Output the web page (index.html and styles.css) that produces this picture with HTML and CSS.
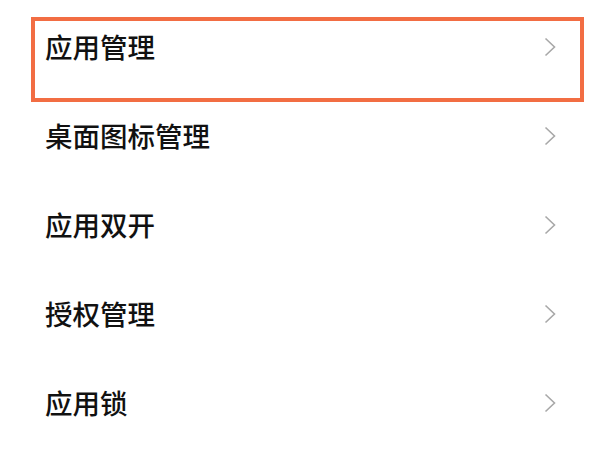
FILE: index.html
```html
<!DOCTYPE html>
<html lang="zh-CN">
<head>
<meta charset="utf-8">
<link rel="stylesheet" href="styles.css">
</head>
<body>
<div class="page">
  <ul class="list">
    <li class="row"><span class="label">应用管理</span><svg class="chev" viewBox="0 0 12 20"><path d="M1.5 1.5 L10.5 10 L1.5 18.5"/></svg></li>
    <li class="row"><span class="label">桌面图标管理</span><svg class="chev" viewBox="0 0 12 20"><path d="M1.5 1.5 L10.5 10 L1.5 18.5"/></svg></li>
    <li class="row"><span class="label">应用双开</span><svg class="chev" viewBox="0 0 12 20"><path d="M1.5 1.5 L10.5 10 L1.5 18.5"/></svg></li>
    <li class="row"><span class="label">授权管理</span><svg class="chev" viewBox="0 0 12 20"><path d="M1.5 1.5 L10.5 10 L1.5 18.5"/></svg></li>
    <li class="row"><span class="label">应用锁</span><svg class="chev" viewBox="0 0 12 20"><path d="M1.5 1.5 L10.5 10 L1.5 18.5"/></svg></li>
  </ul>
  <div class="highlight"></div>
</div>
</body>
</html>
```
FILE: styles.css
```css
html, body {
  margin: 0;
  padding: 0;
  background: #ffffff;
}
.page {
  position: relative;
  width: 600px;
  height: 450px;
  overflow: hidden;
  font-family: "Noto Sans CJK SC", "Noto Sans", sans-serif;
}
.list {
  list-style: none;
  margin: 0;
  padding: 2px 0 0 0;
}
.row {
  height: 89px;
  display: flex;
  align-items: center;
  justify-content: space-between;
  padding: 0 44px 0 45px;
}
.label {
  font-size: 27.5px;
  font-weight: 500;
  color: #111111;
  line-height: 1;
}
.chev {
  width: 12px;
  height: 20px;
  fill: none;
  stroke: #a8a8a8;
  stroke-width: 1.6;
}
.highlight {
  position: absolute;
  left: 31px;
  top: 17px;
  width: 545px;
  height: 77px;
  border: 4.5px solid #f26d43;
}
```
